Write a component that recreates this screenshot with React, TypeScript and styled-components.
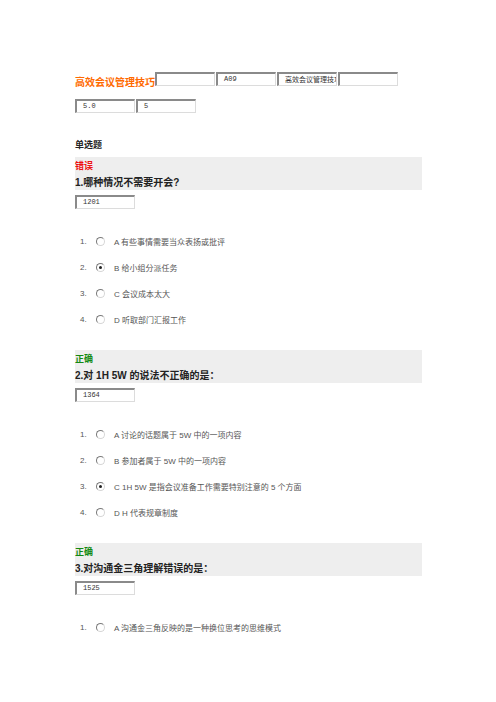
import React from 'react'
import styled, { createGlobalStyle } from 'styled-components'

const GlobalStyle = createGlobalStyle`
  html, body {
    margin: 0;
    padding: 0;
    background: #ffffff;
  }
  body {
    font-family: "Liberation Sans", "Noto Sans CJK SC", sans-serif;
  }
`

const Page = styled.div`
  width: 496px;
  height: 702px;
  box-sizing: border-box;
  padding: 70px 74px 0 75px;
  overflow: hidden;
`

const HeaderRow = styled.div`
  display: flex;
  align-items: flex-end;
  height: 16px;
`

const Title = styled.span`
  color: #ff6a00;
  font-weight: bold;
  font-size: 10px;
  line-height: 12px;
  margin-bottom: -3px;
  letter-spacing: 0;
`

const FieldRow = styled.div`
  display: flex;
  gap: 1px;
  margin-top: ${({ $top }: { $top?: number }) => $top ?? 0}px;
`

const Field = styled.div<{ $serif?: boolean }>`
  width: 60px;
  height: 14px;
  box-sizing: border-box;
  border-style: solid;
  border-width: 2px 1px 1px 2px;
  border-color: #8a8a8a #dcdcdc #dcdcdc #8a8a8a;
  background: #fff;
  padding: 0 0 0 6px;
  font-family: ${({ $serif }) => ($serif ? '"Noto Sans CJK SC", sans-serif' : '"Liberation Mono", monospace')};
  font-size: 7px;
  line-height: 10px;
  color: #333;
  white-space: nowrap;
  overflow: hidden;
`

const SectionLabel = styled.div`
  margin-top: 26px;
  font-weight: bold;
  font-size: 9px;
  line-height: 12px;
  color: #222;
`

const QuestionPanel = styled.div<{ $top: number }>`
  margin-top: ${({ $top }) => $top}px;
  width: 347px;
  height: 33px;
  background: #eeeeee;
  box-sizing: border-box;
  padding-top: 3px;
`

const Verdict = styled.div<{ $ok: boolean }>`
  color: ${({ $ok }) => ($ok ? '#128a12' : '#ee1111')};
  font-weight: bold;
  font-size: 9px;
  line-height: 12px;
`

const QuestionText = styled.div`
  margin-top: 5px;
  font-weight: bold;
  font-size: 10px;
  line-height: 12px;
  color: #222;
`

const AnswerField = styled(Field)`
  margin-top: 5px;
`

const OptionList = styled.div`
  margin-top: 19px;
`

const OptionRow = styled.div`
  display: flex;
  align-items: center;
  height: 26px;
  font-size: 8px;
  color: #555;
`

const OptionNumber = styled.span`
  width: 21px;
  padding-left: 5px;
  box-sizing: border-box;
`

const Radio = styled.span<{ $checked?: boolean }>`
  position: relative;
  width: 7px;
  height: 7px;
  border-radius: 50%;
  border: 1px solid;
  border-color: #7a7a7a #d6d6d6 #d6d6d6 #7a7a7a;
  background: #fff;
  margin-right: 9px;
  &::after {
    content: '';
    display: ${({ $checked }) => ($checked ? 'block' : 'none')};
    position: absolute;
    left: 2px;
    top: 2px;
    width: 3px;
    height: 3px;
    border-radius: 50%;
    background: #222;
  }
`

const OptionText = styled.span`
  white-space: nowrap;
`

type Question = {
  ok: boolean
  text: string
  code: string
  top: number
  options: string[]
  checked: number
}

const questions: Question[] = [
  {
    ok: false,
    text: '1.哪种情况不需要开会?',
    code: '1201',
    top: 6,
    options: ['A 有些事情需要当众表扬或批评', 'B 给小组分派任务', 'C 会议成本太大', 'D 听取部门汇报工作'],
    checked: 1,
  },
  {
    ok: true,
    text: '2.对 1H  5W 的说法不正确的是：',
    code: '1364',
    top: 18,
    options: [
      'A 讨论的话题属于 5W 中的一项内容',
      'B 参加者属于 5W 中的一项内容',
      'C 1H  5W 是指会议准备工作需要特别注意的 5 个方面',
      'D H 代表规章制度',
    ],
    checked: 2,
  },
  {
    ok: true,
    text: '3.对沟通金三角理解错误的是：',
    code: '1525',
    top: 18,
    options: ['A 沟通金三角反映的是一种换位思考的思维模式'],
    checked: -1,
  },
]

export default function App() {
  return (
    <>
      <GlobalStyle />
      <Page>
        <HeaderRow>
          <Title>高效会议管理技巧</Title>
          <FieldRow>
            <Field />
            <Field>A09</Field>
            <Field $serif>高效会议管理技巧</Field>
            <Field />
          </FieldRow>
        </HeaderRow>
        <FieldRow $top={13}>
          <Field>5.0</Field>
          <Field>5</Field>
        </FieldRow>
        <SectionLabel>单选题</SectionLabel>
        {questions.map((q) => (
          <div key={q.code}>
            <QuestionPanel $top={q.top}>
              <Verdict $ok={q.ok}>{q.ok ? '正确' : '错误'}</Verdict>
              <QuestionText>{q.text}</QuestionText>
            </QuestionPanel>
            <AnswerField>{q.code}</AnswerField>
            <OptionList>
              {q.options.map((opt, i) => (
                <OptionRow key={opt}>
                  <OptionNumber>{i + 1}.</OptionNumber>
                  <Radio $checked={i === q.checked} />
                  <OptionText>{opt}</OptionText>
                </OptionRow>
              ))}
            </OptionList>
          </div>
        ))}
      </Page>
    </>
  )
}
